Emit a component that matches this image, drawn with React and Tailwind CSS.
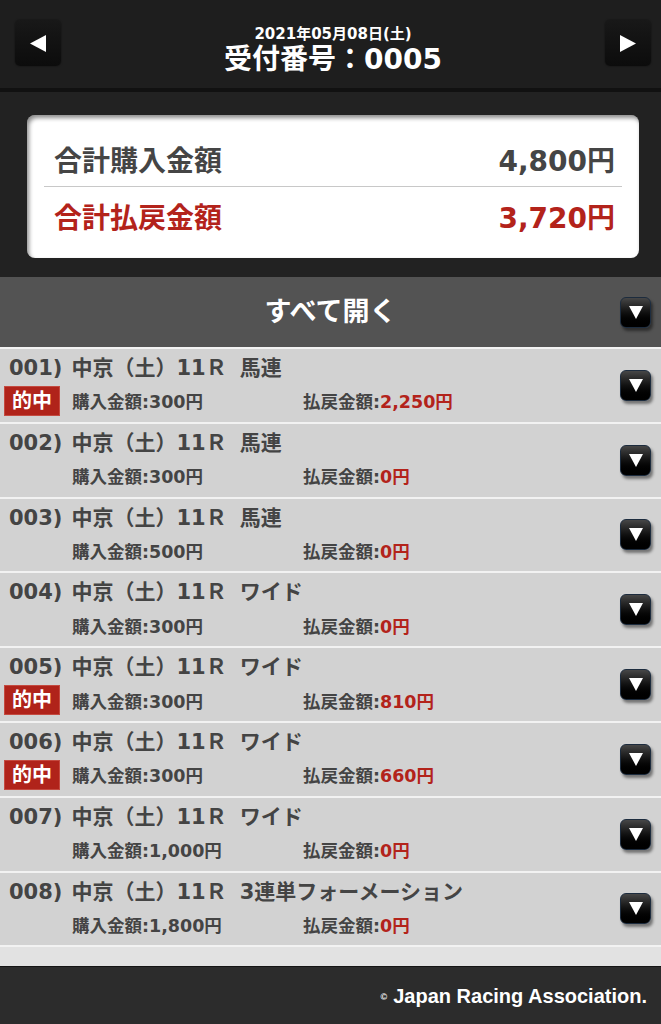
import React from "react";

const jp = { fontFamily: '"DejaVu Sans", "Noto Sans CJK JP", sans-serif' };

const rows = [
  { no: "001", type: "馬連", hit: true, buy: "300", pay: "2,250" },
  { no: "002", type: "馬連", hit: false, buy: "300", pay: "0" },
  { no: "003", type: "馬連", hit: false, buy: "500", pay: "0" },
  { no: "004", type: "ワイド", hit: false, buy: "300", pay: "0" },
  { no: "005", type: "ワイド", hit: true, buy: "300", pay: "810" },
  { no: "006", type: "ワイド", hit: true, buy: "300", pay: "660" },
  { no: "007", type: "ワイド", hit: false, buy: "1,000", pay: "0" },
  { no: "008", type: "3連単フォーメーション", hit: false, buy: "1,800", pay: "0" },
];

function DownButton() {
  return (
    <div className="w-[31px] h-[31px] rounded-[6px] border border-[#1d2c3e] bg-gradient-to-b from-[#474747] via-[#111111] to-[#000000] shadow-[2px_3px_3px_rgba(0,0,0,0.45)] flex items-center justify-center">
      <svg width="14" height="13" viewBox="0 0 14 13">
        <polygon points="0,0 14,0 7,13" fill="#ffffff" />
      </svg>
    </div>
  );
}

function NavButton({ dir }) {
  return (
    <div className="w-[46px] h-[46px] rounded-[5px] bg-gradient-to-b from-[#181818] to-[#0c0c0c] shadow-[0_0_2px_rgba(0,0,0,0.6)] flex items-center justify-center">
      <svg width="16" height="17" viewBox="0 0 16 17">
        {dir === "left" ? (
          <polygon points="16,0 16,17 0,8.5" fill="#ffffff" />
        ) : (
          <polygon points="0,0 0,17 16,8.5" fill="#ffffff" />
        )}
      </svg>
    </div>
  );
}

export default function App() {
  return (
    <div className="w-[661px] min-h-[1024px] bg-[#222222] flex flex-col" style={jp}>
      {/* header */}
      <div className="h-[92px] bg-[#1e1e1e] border-b-4 border-[#111111] flex items-start justify-between px-[15px]">
        <div className="mt-[20px]">
          <NavButton dir="left" />
        </div>
        <div className="flex flex-col items-center pt-[25px] text-white font-bold">
          <div className="text-[15px] leading-[18px]">2021年05月08日(土)</div>
          <div className="text-[28px] leading-[32px] mt-[1px]">受付番号：0005</div>
        </div>
        <div className="mt-[20px] mr-[-5px]">
          <NavButton dir="right" />
        </div>
      </div>

      {/* summary card */}
      <div className="pt-[23px] pb-[19px] pl-[27px] pr-[22px]">
        <div className="bg-white rounded-[8px] shadow-[inset_2px_3px_4px_rgba(0,0,0,0.45)] px-[17px] pt-[22px] pb-[7px] font-bold">
          <div className="h-[50px] flex items-center justify-between pl-[10px] pr-[7px] text-[#454545] border-b border-[#c8c8c8]">
            <span className="text-[28px]">合計購入金額</span>
            <span className="text-[28px]">4,800円</span>
          </div>
          <div className="h-[64px] flex items-center justify-between pl-[10px] pr-[7px] text-[#b3231b]">
            <span className="text-[28px]">合計払戻金額</span>
            <span className="text-[28px]">3,720円</span>
          </div>
        </div>
      </div>

      {/* expand all bar */}
      <div className="h-[70px] bg-[#535353] relative flex items-center justify-center">
        <span className="text-white font-bold text-[27px]">すべて開く</span>
        <div className="absolute right-[10px] top-[20px]">
          <DownButton />
        </div>
      </div>

      {/* list */}
      <div className="bg-[#d2d2d2] flex flex-col">
        {rows.map((r) => (
          <div
            key={r.no}
            className="h-[74.8px] border-t-2 border-[#f2f2f2] flex items-center justify-between pl-[4px] pr-[10px]"
          >
            <div className="flex flex-col self-start pt-[7px] font-bold text-[#444444]">
              <div className="pl-[5px] text-[21px] leading-[24px] flex">
                <span>{r.no})</span>
                <span className="ml-[9px]">中京（土）11Ｒ</span>
                <span className="ml-[13px]">{r.type}</span>
              </div>
              <div className="mt-[6px] h-[30px] flex items-center">
                {r.hit ? (
                  <div className="w-[56px] h-[30px] bg-[#b0231a] border border-[#c44a40] text-white text-[20px] flex items-center justify-center">
                    的中
                  </div>
                ) : (
                  <div className="w-[56px] h-[30px]" />
                )}
                <div className="ml-[12px] w-[231px] text-[17.5px] pt-[3px]">購入金額:{r.buy}円</div>
                <div className="text-[17.5px] pt-[3px]">
                  払戻金額:<span className="text-[#b3231b]">{r.pay}円</span>
                </div>
              </div>
            </div>
            <DownButton />
          </div>
        ))}
        <div className="h-[21px] border-t-2 border-[#f2f2f2] bg-[#e2e2e2]" />
      </div>

      {/* footer */}
      <div className="flex-1 min-h-[57px] bg-[#2c2c2c] border-t border-[#151515] flex items-center justify-end pr-[14px] text-white font-bold" style={{ fontFamily: '"Liberation Sans", Arial, sans-serif' }}>
        <span className="text-[9px] mr-[6px] mt-[4px]">©</span>
        <span className="text-[20px]">Japan Racing Association.</span>
      </div>
    </div>
  );
}
